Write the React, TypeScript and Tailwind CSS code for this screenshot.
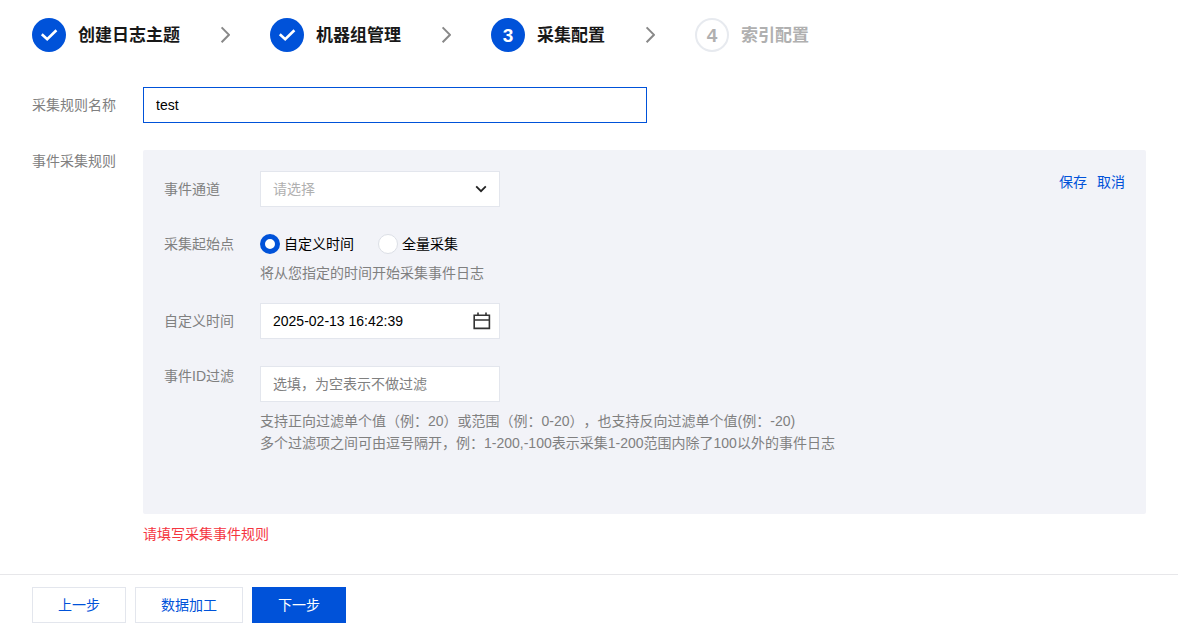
import { Fragment, useState, type ReactNode } from "react"
import { clsx } from "clsx"

const steps = ["创建日志主题", "机器组管理", "采集配置", "索引配置"]
const current = 2

function StepBadge({ index }: { index: number }) {
  return (
    <span
      className={clsx(
        "flex size-[34px] shrink-0 items-center justify-center rounded-full text-[19px] leading-none font-bold",
        index <= current ? "bg-[#0052d9] text-white" : "border-2 border-[#e7eaef] text-[#b0b0b0]"
      )}
    >
      {index < current ? (
        <svg width="18" height="14" viewBox="0 0 18 14" fill="none" stroke="currentColor" strokeWidth="2.6" aria-hidden="true">
          <path d="M1.8 6.2 7.2 11.2 16.4 2.2" />
        </svg>
      ) : (
        index + 1
      )}
    </span>
  )
}

function Steps() {
  return (
    <ol className="flex items-center px-8 pt-[18px]">
      {steps.map((title, i) => (
        <Fragment key={title}>
          {i > 0 && (
            <li aria-hidden="true" className="mx-10">
              <svg width="10" height="18" viewBox="0 0 10 18" fill="none" stroke="#888" strokeWidth="2">
                <path d="M1.6 1.4 9 8.8 1.6 16.2" />
              </svg>
            </li>
          )}
          <li className="flex items-center gap-3">
            <StepBadge index={i} />
            <span
              className={clsx(
                "pt-px text-[17px] font-bold whitespace-nowrap",
                i <= current ? "text-[#181818]" : "text-[#b0b0b0]"
              )}
            >
              {title}
            </span>
          </li>
        </Fragment>
      ))}
    </ol>
  )
}

const box = "h-9 w-full border border-[#e3e6ed] bg-white px-3 outline-none placeholder:text-[#808080]"
const radio = "size-5 appearance-none rounded-full border border-[#dcdfe6] bg-white checked:border-[5px] checked:border-[#0052d9]"
const button = "h-9 border px-[25px]"

function Field({ label, htmlFor, children }: { label: string; htmlFor: string; children: ReactNode }) {
  return (
    <div className="flex items-start">
      <label htmlFor={htmlFor} className="w-24 shrink-0 pt-[7px] text-[#808080]">
        {label}
      </label>
      <div className="min-w-0 flex-1">{children}</div>
    </div>
  )
}

function RulePanel() {
  const [channel, setChannel] = useState("")
  const [start, setStart] = useState("custom")

  return (
    <section className="flex min-h-[364px] min-w-0 flex-1 items-start rounded-xs bg-[#f2f3f8] p-[21px]">
      <div className="min-w-0 flex-1">
        <Field label="事件通道" htmlFor="channel">
          <div className="relative w-60">
            <select
              id="channel"
              value={channel}
              onChange={(e) => setChannel(e.target.value)}
              className={clsx(box, "appearance-none", channel ? "text-black" : "text-[#b0b0b0]")}
            >
              <option value="">请选择</option>
            </select>
            <svg
              width="12"
              height="8"
              viewBox="0 0 12 8"
              fill="none"
              stroke="#222"
              strokeWidth="1.8"
              className="pointer-events-none absolute top-[14px] right-[13px]"
            >
              <path d="M1.2 1.4 6 6.2 10.8 1.4" />
            </svg>
          </div>
        </Field>

        <fieldset className="mt-[26px] flex items-start">
          <legend className="float-left w-24 shrink-0 text-[#808080]">采集起始点</legend>
          <div>
            <div className="flex gap-6">
              <label className="flex items-center gap-1">
                <input
                  type="radio"
                  name="start"
                  className={radio}
                  checked={start === "custom"}
                  onChange={() => setStart("custom")}
                />
                自定义时间
              </label>
              <label className="flex items-center gap-1">
                <input
                  type="radio"
                  name="start"
                  className={radio}
                  checked={start === "all"}
                  onChange={() => setStart("all")}
                />
                全量采集
              </label>
            </div>
            <p className="mt-[7px] text-[#808080]">将从您指定的时间开始采集事件日志</p>
          </div>
        </fieldset>

        <div className="mt-[19px]">
          <Field label="自定义时间" htmlFor="time">
            <div className="relative w-60">
              <input id="time" className={box} defaultValue="2025-02-13 16:42:39" />
              <svg
                width="18"
                height="18"
                viewBox="0 0 18 18"
                fill="none"
                stroke="#333"
                strokeWidth="1.6"
                className="pointer-events-none absolute top-[9px] right-[9px]"
              >
                <path d="M1.2 3.2h15.2v13.2H1.2zM1.2 8h15.2M5 .5v3M13 .5v3" />
              </svg>
            </div>
          </Field>
        </div>

        <div className="mt-[26px] flex items-start">
          <label htmlFor="filter" className="w-24 shrink-0 text-[#808080]">
            事件ID过滤
          </label>
          <div className="min-w-0 flex-1 pt-px">
            <div className="w-60">
              <input id="filter" className={box} placeholder="选填，为空表示不做过滤" />
            </div>
            <p className="mt-2 text-[#808080] [text-spacing-trim:space-all]">
              支持正向过滤单个值（例：20）或范围（例：0-20），也支持反向过滤单个值(例：-20)
              <br />
              多个过滤项之间可由逗号隔开，例：1-200,-100表示采集1-200范围内除了100以外的事件日志
            </p>
          </div>
        </div>
      </div>

      <div className="flex shrink-0 gap-[10px] text-[#0052d9]">
        <button type="button">保存</button>
        <button type="button">取消</button>
      </div>
    </section>
  )
}

export default function App() {
  return (
    <main className="bg-white font-['Liberation_Sans','Noto_Sans_CJK_SC',sans-serif] text-[14px] leading-[22px] text-black">
      <Steps />

      <form>
        <div className="flex items-start px-8 pt-[35px]">
          <label htmlFor="name" className="w-[111px] shrink-0 pt-[7px] text-[#808080]">
            采集规则名称
          </label>
          <input
            id="name"
            defaultValue="test"
            className="h-9 w-full max-w-[504px] border border-[#0052d9] px-3 outline-none"
          />
        </div>

        <div className="flex items-start px-8 pt-[27px]">
          <h2 className="w-[111px] shrink-0 text-[#808080]">事件采集规则</h2>
          <div className="min-w-0 flex-1">
            <RulePanel />
            <p role="alert" className="mt-[9px] text-[#f5353f]">
              请填写采集事件规则
            </p>
          </div>
        </div>

        <footer className="mt-[29px] flex gap-[9px] border-t border-[#e7e7ea] px-8 py-3">
          <button type="button" className={clsx(button, "border-[#e3e6ed] bg-white text-[#0052d9]")}>
            上一步
          </button>
          <button type="button" className={clsx(button, "border-[#e3e6ed] bg-white text-[#0052d9]")}>
            数据加工
          </button>
          <button type="button" className={clsx(button, "border-[#0052d9] bg-[#0052d9] text-white")}>
            下一步
          </button>
        </footer>
      </form>
    </main>
  )
}
